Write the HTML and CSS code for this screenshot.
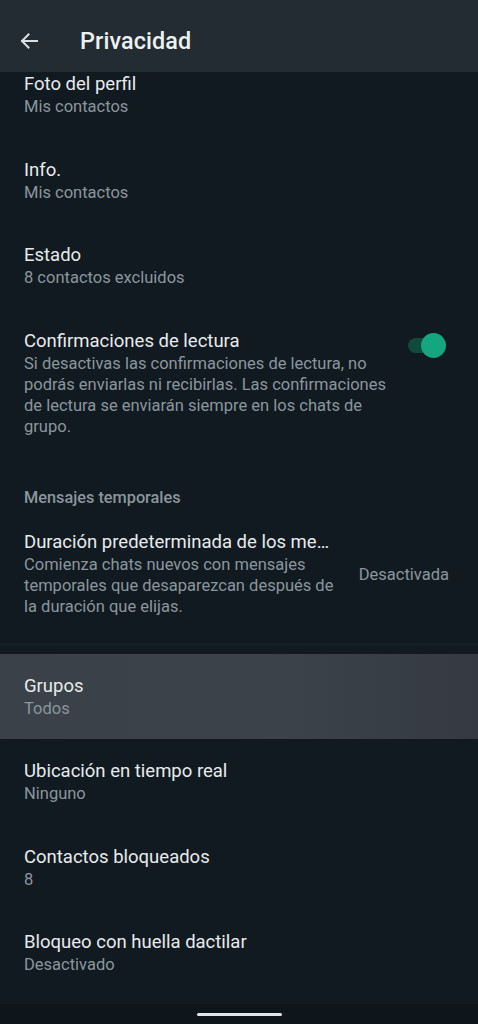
FILE: index.html
```html
<!DOCTYPE html>
<html lang="es">
<head>
<meta charset="utf-8">
<title>Privacidad</title>
<link rel="stylesheet" href="styles.css">
</head>
<body>
<div class="screen">
  <header class="appbar">
    <span class="back" aria-label="Atrás">
      <svg width="24" height="24" viewBox="0 0 24 24"><path d="M20 12H5M11.5 5.5L5 12l6.5 6.5" fill="none" stroke="#d9dee1" stroke-width="2" stroke-linecap="square"/></svg>
    </span>
    <h1 class="title">Privacidad</h1>
  </header>
  <main class="list">
    <div class="item item--cut">
      <div class="item-title">Foto del perfil</div>
      <div class="item-sub">Mis contactos</div>
    </div>
    <div class="item">
      <div class="item-title">Info.</div>
      <div class="item-sub">Mis contactos</div>
    </div>
    <div class="item">
      <div class="item-title">Estado</div>
      <div class="item-sub">8 contactos excluidos</div>
    </div>
    <div class="item item--row">
      <div class="item-text item-text--narrow">
        <div class="item-title">Confirmaciones de lectura</div>
        <div class="item-sub">Si desactivas las confirmaciones de lectura, no podrás enviarlas ni recibirlas. Las confirmaciones de lectura se enviarán siempre en los chats de grupo.</div>
      </div>
      <div class="switch"><span class="track"></span><span class="knob"></span></div>
    </div>
    <div class="section-head">Mensajes temporales</div>
    <div class="item item--row item--center">
      <div class="item-text item-text--dur">
        <div class="item-title">Duración predeterminada de los me…</div>
        <div class="item-sub">Comienza chats nuevos con mensajes temporales que desaparezcan después de la duración que elijas.</div>
      </div>
      <div class="item-value">Desactivada</div>
    </div>
    <div class="divider"></div>
    <div class="item item--active">
      <div class="item-title">Grupos</div>
      <div class="item-sub">Todos</div>
    </div>
    <div class="item">
      <div class="item-title">Ubicación en tiempo real</div>
      <div class="item-sub">Ninguno</div>
    </div>
    <div class="item">
      <div class="item-title">Contactos bloqueados</div>
      <div class="item-sub">8</div>
    </div>
    <div class="item">
      <div class="item-title">Bloqueo con huella dactilar</div>
      <div class="item-sub">Desactivado</div>
    </div>
  </main>
  <footer class="navbar"><span class="handle"></span></footer>
</div>
</body>
</html>
```
FILE: styles.css
```css
* { box-sizing: border-box; margin: 0; padding: 0; }
html, body { background: #121a21; }
body {
  width: 478px;
  height: 1024px;
  overflow: hidden;
  font-family: Roboto, "Noto Sans", "Liberation Sans", sans-serif;
  color: #e6e9eb;
}
.screen {
  height: 1024px;
  display: flex;
  flex-direction: column;
}
.appbar {
  height: 72px;
  flex: none;
  background: #222c32;
  display: flex;
  align-items: center;
  padding: 10px 0 0 17px;
  gap: 39px;
}
.back { display: flex; width: 24px; height: 24px; }
.title {
  font-size: 23.4px;
  font-weight: 500;
  color: #eef1f2;
  letter-spacing: 0.1px;
}
.list {
  flex: 1;
  overflow: hidden;
  display: flex;
  flex-direction: column;
}
.item {
  padding: 20px 24px 20.5px 24px;
}
.item--cut { padding-top: 0; }
.item--row {
  display: flex;
  align-items: flex-start;
  justify-content: space-between;
}
.item--center { align-items: center; }
.item-text { min-width: 0; }
.item-text--narrow { width: 372px; }
.item-text--dur { width: 316px; }
.item-title {
  font-size: 18.5px;
  line-height: 24px;
  color: #e7eaec;
  white-space: nowrap;
}
.item-sub {
  font-size: 16.5px;
  line-height: 21px;
  color: #8a969d;
}
.item-value {
  font-size: 16.5px;
  color: #8a969d;
  margin-right: 5px;
  padding-top: 2px;
}
.switch {
  position: relative;
  width: 38px;
  height: 25px;
  margin-top: 4px;
  margin-right: 8px;
}
.track {
  position: absolute;
  left: 0;
  top: 5px;
  width: 32px;
  height: 15px;
  border-radius: 8px;
  background: #0f4a3d;
}
.knob {
  position: absolute;
  right: 0;
  top: 0;
  width: 25px;
  height: 25px;
  border-radius: 50%;
  background: #13a67f;
}
.section-head {
  padding: 30px 24px 1px 24px;
  font-size: 16.3px;
  line-height: 22px;
  font-weight: 500;
  color: #8a969d;
}
.divider {
  margin-top: 5px;
  margin-bottom: 8px;
  height: 3px;
  background: #171f26;
}
.item--active {
  background: linear-gradient(90deg, #3a4148 0%, #3b4249 60%, #353a42 100%);
}
.navbar {
  height: 20px;
  flex: none;
  background: #0f161b;
  display: flex;
  justify-content: center;
  align-items: flex-start;
  padding-top: 9px;
}
.handle {
  width: 85px;
  height: 3px;
  border-radius: 2px;
  background: #e3e6ea;
}
```
